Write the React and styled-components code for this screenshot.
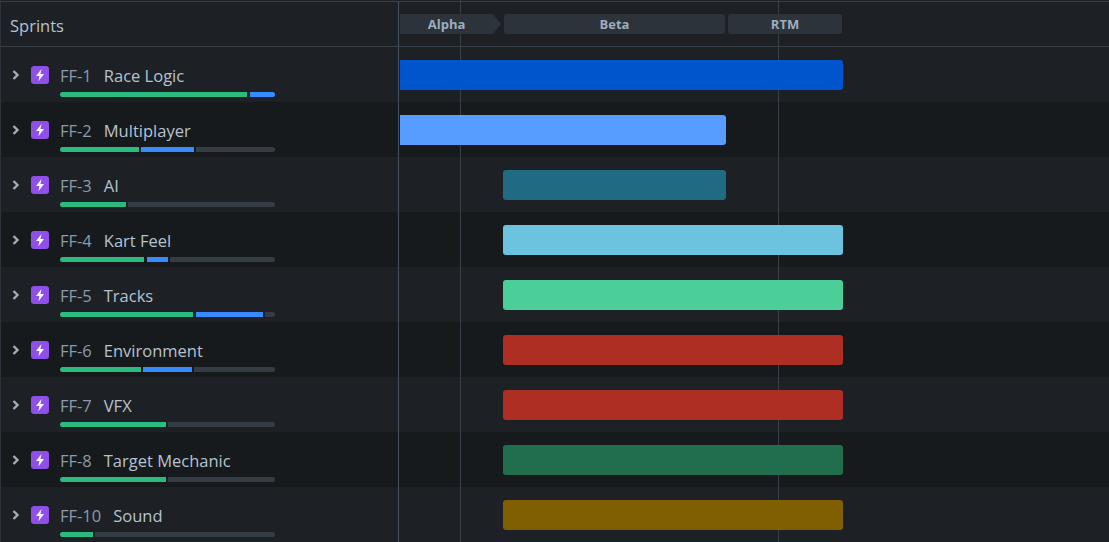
import React from 'react';
import styled, { createGlobalStyle } from 'styled-components';

const GlobalStyle = createGlobalStyle`
  html, body {
    margin: 0;
    height: 100%;
    overflow: hidden;
    background: #1d2125;
  }
`;

const Page = styled.div`
  position: relative;
  width: 1109px;
  height: 542px;
  overflow: hidden;
  box-sizing: border-box;
  padding-top: 1px;
  border-left: 1px solid #2c333a;
  font-family: "Open Sans", "Noto Sans", sans-serif;
  color: #b6c2cf;
`;

const Header = styled.div`
  display: flex;
  height: 46px;
  box-sizing: border-box;
  border-top: 1px solid #38414a;
  border-bottom: 1px solid #38414a;
`;

const SideTitle = styled.div`
  width: 398px;
  flex: none;
  box-sizing: border-box;
  padding: 0 0 0 9px;
  border-right: 1px solid #454f59;
  font-size: 16.5px;
  line-height: 47px;
  color: #b6c2cf;
`;

const Releases = styled.div`
  display: flex;
  padding: 12px 0 0 1px;
  gap: 3px;
`;

const Release = styled.div`
  position: relative;
  z-index: 1;
  width: ${p => p.$w}px;
  height: 20px;
  box-sizing: border-box;
  padding-right: ${p => (p.$arrow ? 8 : 0)}px;
  background: #2c333a;
  border-radius: ${p => (p.$arrow ? '0' : '3px')};
  clip-path: ${p => (p.$arrow ? 'polygon(0 0, 93px 0, 100% 50%, 93px 100%, 0 100%)' : 'none')};
  font-size: 13px;
  font-weight: 700;
  line-height: 21px;
  text-align: center;
  color: #9fadbc;
`;

const Row = styled.div`
  display: flex;
  height: 55px;
  background: ${p => (p.$alt ? '#161a1d' : '#1d2125')};
`;

const Side = styled.div`
  width: 398px;
  flex: none;
  box-sizing: border-box;
  padding: 19px 0 0 9px;
  border-right: 1px solid #454f59;
  display: flex;
  align-items: flex-start;
`;

const Chevron = styled.svg`
  width: 12px;
  height: 12px;
  margin-top: 3px;
  flex: none;
`;

const IssueIcon = styled.svg`
  width: 18px;
  height: 18px;
  margin-left: 9px;
  flex: none;
`;

const Info = styled.div`
  margin-left: 11px;
  width: 215px;
`;

const Title = styled.div`
  display: flex;
  gap: 12px;
  height: 26px;
  font-size: 16.5px;
  line-height: 20px;
  white-space: nowrap;
`;

const Key = styled.span`
  color: #8c9bab;
`;

const Name = styled.span`
  color: #b6c2cf;
`;

const Progress = styled.div`
  display: flex;
  gap: 2px;
  height: 5px;
  border-radius: 3px;
  overflow: hidden;
`;

const Segment = styled.div`
  height: 5px;
  flex: ${p => (p.$w ? `0 0 ${p.$w}px` : '1')};
  margin-left: ${p => p.$ml || 0}px;
  background: ${p => p.$color};
`;

const Track = styled.div`
  flex: 1;
  padding-top: 13px;
`;

const Bar = styled.div`
  position: relative;
  z-index: 1;
  height: 30px;
  margin-left: ${p => p.$start}px;
  width: ${p => p.$w}px;
  background: ${p => p.$color};
  border-radius: ${p => (p.$start === 1 ? '0 3px 3px 0' : '3px')};
`;

const GridLine = styled.div`
  position: absolute;
  top: 0;
  bottom: 0;
  left: ${p => p.$x}px;
  width: 1px;
  background: #38414a;
`;

const GREEN = '#2abb7f';
const BLUE = '#388bff';
const GRAY = '#343c44';

const rows = [
  { id: 'FF-1', name: 'Race Logic', done: 187, doing: 25, ml: 1, start: 1, w: 443, color: '#0055cc' },
  { id: 'FF-2', name: 'Multiplayer', done: 79, doing: 53, start: 1, w: 326, color: '#579dff' },
  { id: 'FF-3', name: 'AI', done: 66, start: 104, w: 223, color: '#206a83' },
  { id: 'FF-4', name: 'Kart Feel', done: 84, doing: 21, ml: 1, start: 104, w: 340, color: '#6cc3e0' },
  { id: 'FF-5', name: 'Tracks', done: 133, doing: 67, ml: 1, start: 104, w: 340, color: '#4bce97' },
  { id: 'FF-6', name: 'Environment', done: 81, doing: 49, start: 104, w: 340, color: '#ae2e24' },
  { id: 'FF-7', name: 'VFX', done: 106, start: 104, w: 340, color: '#ae2e24' },
  { id: 'FF-8', name: 'Target Mechanic', done: 106, start: 104, w: 340, color: '#216e4e' },
  { id: 'FF-10', name: 'Sound', done: 33, start: 104, w: 340, color: '#7f5f01' },
];

const App = () => (
  <Page>
    <GlobalStyle />
    <Header>
      <SideTitle>Sprints</SideTitle>
      <Releases>
        <Release $w={101} $arrow>Alpha</Release>
        <Release $w={221}>Beta</Release>
        <Release $w={114}>RTM</Release>
      </Releases>
    </Header>
    {rows.map((r, i) => (
      <Row key={r.id} $alt={i % 2 === 1}>
        <Side>
          <Chevron viewBox="0 0 12 12">
            <path d="M3.5 2l4 4-4 4" fill="none" stroke="#9fadbc" strokeWidth="2.4" />
          </Chevron>
          <IssueIcon viewBox="0 0 18 18">
            <rect width="18" height="18" rx="3" fill="#8f4fe8" />
            <path d="M10.6 3L5 10h3.4l-1 5.2L13 8h-3.6z" fill="#fff" />
          </IssueIcon>
          <Info>
            <Title>
              <Key>{r.id}</Key>
              <Name>{r.name}</Name>
            </Title>
            <Progress>
              <Segment $w={r.done} $color={GREEN} />
              {r.doing && <Segment $w={r.doing} $ml={r.ml} $color={BLUE} />}
              {r.id !== 'FF-1' && <Segment $color={GRAY} />}
            </Progress>
          </Info>
        </Side>
        <Track>
          <Bar $start={r.start} $w={r.w} $color={r.color} />
        </Track>
      </Row>
    ))}
    <GridLine $x={459} />
    <GridLine $x={777} />
  </Page>
);

export default App;
